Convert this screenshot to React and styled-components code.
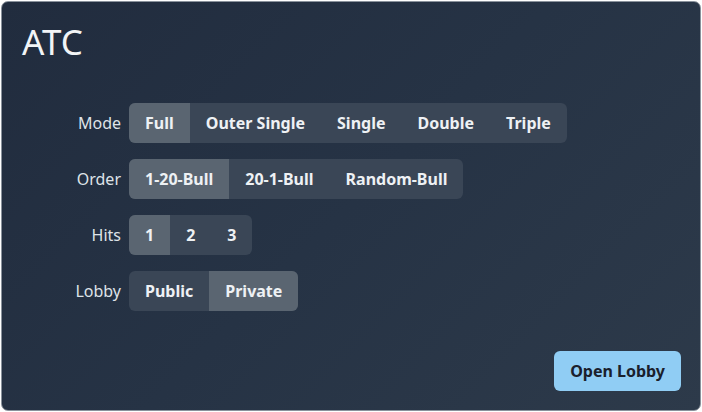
import React, { useState } from "react";
import styled, { createGlobalStyle } from "styled-components";

const GlobalStyle = createGlobalStyle`
  html, body {
    margin: 0;
    padding: 0;
    background: #ffffff;
    font-family: "Noto Sans", "Open Sans", sans-serif;
  }
  * { box-sizing: border-box; }
`;

const rows = [
  { label: "Mode", options: ["Full", "Outer Single", "Single", "Double", "Triple"], initial: 0 },
  { label: "Order", options: ["1-20-Bull", "20-1-Bull", "Random-Bull"], initial: 0 },
  { label: "Hits", options: ["1", "2", "3"], initial: 0 },
  { label: "Lobby", options: ["Public", "Private"], initial: 1 },
];

const OptionRow = ({ label, options, initial }) => {
  const [active, setActive] = useState(initial);
  return (
    <Row>
      <Label>{label}</Label>
      <Group>
        {options.map((o, i) => (
          <Segment key={o} active={i === active} onClick={() => setActive(i)}>
            {o}
          </Segment>
        ))}
      </Group>
    </Row>
  );
};

const App = () => {
  return (
    <>
      <GlobalStyle />
      <Card>
        <Title>ATC</Title>
        <Settings>
          {rows.map((r) => (
            <OptionRow key={r.label} {...r} />
          ))}
        </Settings>
        <Footer>
          <OpenButton>Open Lobby</OpenButton>
        </Footer>
      </Card>
    </>
  );
};

const Card = styled.div`
  margin: 1px;
  width: 700px;
  height: 410px;
  border: 1px solid #8a929c;
  border-radius: 7px;
  background: linear-gradient(135deg, #212c3e 0%, #263345 50%, #2d3a4a 100%);
  color: #edf0f3;
  display: flex;
  flex-direction: column;
  padding: 18px 19px 19px 20px;
`;

const Title = styled.h1`
  margin: 0;
  font-size: 35px;
  font-weight: 400;
  line-height: 44px;
  color: #f2f4f6;
`;

const Settings = styled.div`
  display: flex;
  flex-direction: column;
  gap: 16px;
  margin-top: 39px;
`;

const Row = styled.div`
  display: flex;
  align-items: center;
  gap: 8px;
`;

const Label = styled.span`
  width: 99px;
  text-align: right;
  font-size: 16px;
  color: #dfe3e8;
`;

const Group = styled.div`
  display: flex;
  background: #3a4656;
  border-radius: 6px;
  overflow: hidden;
`;

const Segment = styled.button`
  height: 40px;
  padding: 0 16px;
  border: none;
  margin: 0;
  font-family: inherit;
  font-size: 16px;
  font-weight: 700;
  color: #eef1f4;
  background: ${(p) => (p.active ? "#5a6571" : "transparent")};
  cursor: pointer;
`;

const Footer = styled.div`
  margin-top: auto;
  display: flex;
  justify-content: flex-end;
`;

const OpenButton = styled.button`
  height: 40px;
  padding: 0 16px;
  border: none;
  border-radius: 6px;
  background: #90cdf4;
  color: #1a202c;
  font-family: inherit;
  font-size: 16px;
  font-weight: 700;
  cursor: pointer;
`;

export default App;
